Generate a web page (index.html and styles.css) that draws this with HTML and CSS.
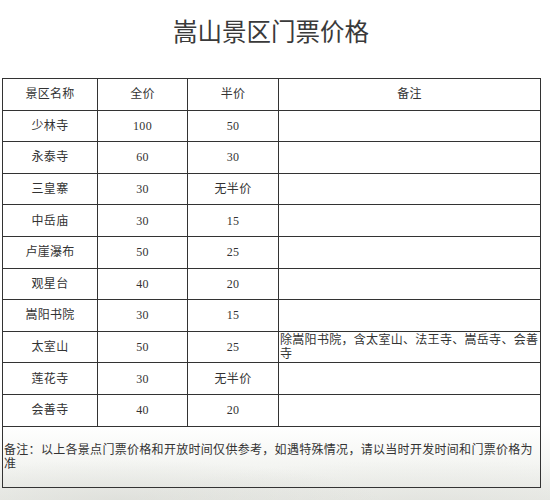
FILE: index.html
```html
<!DOCTYPE html>
<html lang="zh-CN">
<head>
<meta charset="utf-8">
<title>嵩山景区门票价格</title>
<link rel="stylesheet" href="styles.css">
</head>
<body>
<div class="page">
  <h1 class="title">嵩山景区门票价格</h1>
  <table class="prices">
    <colgroup>
      <col class="c-name"><col class="c-full"><col class="c-half"><col class="c-note">
    </colgroup>
    <tr><td>景区名称</td><td>全价</td><td>半价</td><td>备注</td></tr>
    <tr><td>少林寺</td><td>100</td><td>50</td><td class="left"></td></tr>
    <tr><td>永泰寺</td><td>60</td><td>30</td><td class="left"></td></tr>
    <tr><td>三皇寨</td><td>30</td><td>无半价</td><td class="left"></td></tr>
    <tr><td>中岳庙</td><td>30</td><td>15</td><td class="left"></td></tr>
    <tr><td>卢崖瀑布</td><td>50</td><td>25</td><td class="left"></td></tr>
    <tr><td>观星台</td><td>40</td><td>20</td><td class="left"></td></tr>
    <tr><td>嵩阳书院</td><td>30</td><td>15</td><td class="left"></td></tr>
    <tr><td>太室山</td><td>50</td><td>25</td><td class="left">除嵩阳书院，含太室山、法王寺、嵩岳寺、会善寺</td></tr>
    <tr><td>莲花寺</td><td>30</td><td>无半价</td><td class="left"></td></tr>
    <tr><td>会善寺</td><td>40</td><td>20</td><td class="left"></td></tr>
    <tr class="foot"><td colspan="4" class="left">备注：以上各景点门票价格和开放时间仅供参考，如遇特殊情况，请以当时开发时间和门票价格为准</td></tr>
  </table>
</div>
</body>
</html>
```

FILE: styles.css
```css
html, body {
  margin: 0;
  padding: 0;
}
body {
  width: 550px;
  height: 500px;
  overflow: hidden;
  background:
    radial-gradient(ellipse 260px 40px at 120px 500px, rgba(210,212,206,0.5), rgba(210,212,206,0) 100%),
    radial-gradient(ellipse 300px 45px at 430px 505px, rgba(214,216,210,0.45), rgba(214,216,210,0) 100%),
    linear-gradient(to bottom, #ffffff 0px, #ffffff 425px, #f4f5f2 465px, #ecede9 500px);
  color: #333;
  font-family: "Liberation Serif", "Noto Sans CJK SC", sans-serif;
}
.page {
  padding-top: 17px;
  padding-left: 2px;
}
.title {
  margin: 0;
  width: 538px;
  height: 61px;
  text-align: center;
  font-family: "Noto Sans CJK SC", sans-serif;
  font-weight: 400;
  font-size: 24.5px;
  line-height: 28px;
  color: #3a3a3a;
}
.prices {
  border-collapse: collapse;
  table-layout: fixed;
  width: 538px;
  font-size: 12px;
  letter-spacing: 0.3px;
}
.c-name { width: 95px; }
.c-full { width: 90px; }
.c-half { width: 91px; }
.c-note { width: 262px; }
.prices tr {
  height: 31.6px;
}
.prices td {
  border: 1px solid #333;
  padding: 0;
  text-align: center;
  vertical-align: middle;
  line-height: 14px;
}
.prices td.left {
  text-align: left;
  padding-left: 1px;
}
.prices tr.foot {
  height: 61px;
}
```
